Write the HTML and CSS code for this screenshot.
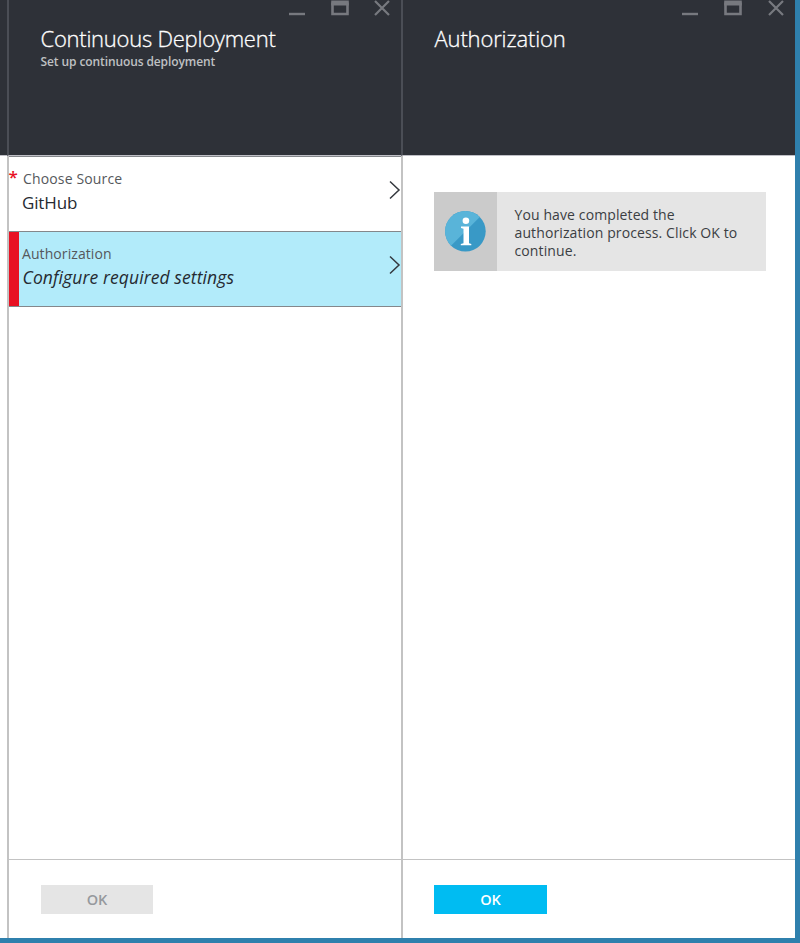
FILE: index.html
```html
<!DOCTYPE html>
<html lang="en">
<head>
<meta charset="utf-8">
<title>Continuous Deployment</title>
<link rel="stylesheet" href="styles.css">
</head>
<body>
<div class="portal">
  <div class="gutter"></div>
  <section class="blade blade-source">
    <header class="blade-header">
      <div class="window-controls">
        <svg width="104" height="18" viewBox="0 0 104 18"><path d="M1 14h16" stroke-width="2.4"/><path d="M44.5 2.5V14h15V2.5" stroke-width="2.6"/><path d="M43.2 3h17.6" stroke-width="5"/><path d="M87 1l14 14M101 1L87 15" stroke-width="2.2"/></svg>
      </div>
      <h1 class="title">Continuous Deployment</h1>
      <p class="subtitle">Set up continuous deployment</p>
    </header>
    <main class="blade-body">
      <div class="option">
        <span class="required">*</span>
        <div class="option-text">
          <div class="label label-source">Choose Source</div>
          <div class="value value-source">GitHub</div>
        </div>
        <svg class="chevron" width="12" height="20" viewBox="0 0 12 20"><path d="M1 1.5l9 8.5-9 8.5"/></svg>
      </div>
      <div class="option option-selected">
        <div class="option-text">
          <div class="label label-auth">Authorization</div>
          <div class="value value-pending">Configure required settings</div>
        </div>
        <svg class="chevron" width="12" height="20" viewBox="0 0 12 20"><path d="M1 1.5l9 8.5-9 8.5"/></svg>
      </div>
    </main>
    <footer class="blade-footer"><button class="ok" disabled>OK</button></footer>
  </section>
  <section class="blade blade-auth">
    <header class="blade-header">
      <div class="window-controls">
        <svg width="104" height="18" viewBox="0 0 104 18"><path d="M1 14h16" stroke-width="2.4"/><path d="M44.5 2.5V14h15V2.5" stroke-width="2.6"/><path d="M43.2 3h17.6" stroke-width="5"/><path d="M88 1l14 14M102 1L88 15" stroke-width="2.2"/></svg>
      </div>
      <h1 class="title title-auth">Authorization</h1>
    </header>
    <main class="blade-body">
      <div class="notice">
        <div class="notice-icon">
          <svg width="42" height="42" viewBox="0 0 42 42"><circle cx="21.4" cy="21.3" r="20.3" fill="#3999c6"/><path d="M7 35.7A20.3 20.3 0 0 1 35.8 6.9z" fill="#59b4d9"/><circle cx="21.9" cy="10.8" r="3.3" fill="#fff"/><path d="M17 16.5h8v16.8l2.3.7v1.2H16.8V34l2.7-.7V18.8l-2.5-.9z" fill="#fff"/></svg>
        </div>
        <p class="notice-text">You have completed the<br>authorization process. Click OK to<br>continue.</p>
      </div>
    </main>
    <footer class="blade-footer"><button class="ok ok-primary">OK</button></footer>
  </section>
</div>
</body>
</html>
```

FILE: styles.css
```css
* { box-sizing: border-box; }
body { margin: 0; background: #fff; font-family: "Open Sans", "Noto Sans", sans-serif; color: #252a31; }
.portal { display: flex; width: 800px; height: 943px; border-right: 5px solid #2f80ad; border-bottom: 5px solid #2f80ad; }
.gutter { width: 7px; height: 156px; background: #2e3138; border-bottom: 1px solid #bfbfc6; }
.blade { display: flex; flex-direction: column; border-left: 2px solid #c3c3c3; }
.blade-source { width: 394px; }
.blade-auth { width: 394px; }
.blade-header { position: relative; height: 156px; margin-left: -2px; padding: 24px 0 0 31.5px; background: #2e3138; border-left: 2px solid #4b4e56; border-bottom: 1px solid #bfbfc6; }
.window-controls { position: absolute; top: 0; right: 9px; height: 18px; }
.blade-auth .window-controls { right: 10px; }
.window-controls svg { display: block; fill: none; stroke: #77797f; }
.title { margin: 0; font-size: 22px; line-height: 28px; font-weight: 300; letter-spacing: -0.25px; color: #fff; white-space: nowrap; -webkit-text-stroke: 0.3px #fff; }
.title-auth { letter-spacing: -0.15px; }
.subtitle { margin: 1px 0 0; font-size: 12px; line-height: 17px; font-weight: 600; letter-spacing: -0.1px; color: #bfc0c3; white-space: nowrap; }
.blade-body { flex: 1; }
.option { position: relative; display: flex; height: 75px; padding: 13px 0 0 13px; border-top: 1px solid #84878b; }
.option-selected { height: 76px; background: #b2ebfa; border-bottom: 1px solid #84878b; }
.option-selected::before { content: ""; position: absolute; left: 0; top: 0; width: 10px; height: 74px; background: #e81123; }
.required { position: absolute; left: -0.5px; top: 8px; color: #e81123; font-size: 17px; line-height: 24px; font-weight: 600; }
.option-text { flex: 1; white-space: nowrap; }
.label { font-size: 14px; line-height: 18px; color: #55585c; }
.label-source { padding-left: 1px; letter-spacing: 0.15px; }
.label-auth { letter-spacing: 0.08px; }
.value { font-size: 17px; line-height: 24px; margin-top: 3px; }
.value-source { letter-spacing: -0.15px; }
.value-pending { padding-left: 0.5px; font-size: 17.5px; line-height: 23px; font-style: italic; letter-spacing: 0.1px; }
.chevron { display: block; margin-top: 10px; fill: none; stroke: #34383e; stroke-width: 1.5; }
.notice { display: flex; width: 332px; height: 79px; margin: 36px 0 0 31px; background: #e5e5e5; }
.notice-icon { display: flex; width: 63px; padding: 18px 0 0 10px; background: #cbcbcb; }
.notice-text { margin: 0; padding: 14px 0 0 17.5px; font-size: 14px; line-height: 18px; letter-spacing: 0.11px; white-space: nowrap; color: #3b3e43; }
.blade-footer { height: 79px; padding: 25px 0 0 32px; border-top: 1px solid #c3c3c3; }
.blade-auth .blade-footer { padding-left: 31px; }
.ok { display: block; width: 112px; height: 29px; padding: 0; border: 0; background: #e5e5e5; color: #96999d; font: 600 14.5px/29px "Open Sans", sans-serif; }
.ok-primary { width: 113px; background: #00bcf2; color: #fff; }
```
